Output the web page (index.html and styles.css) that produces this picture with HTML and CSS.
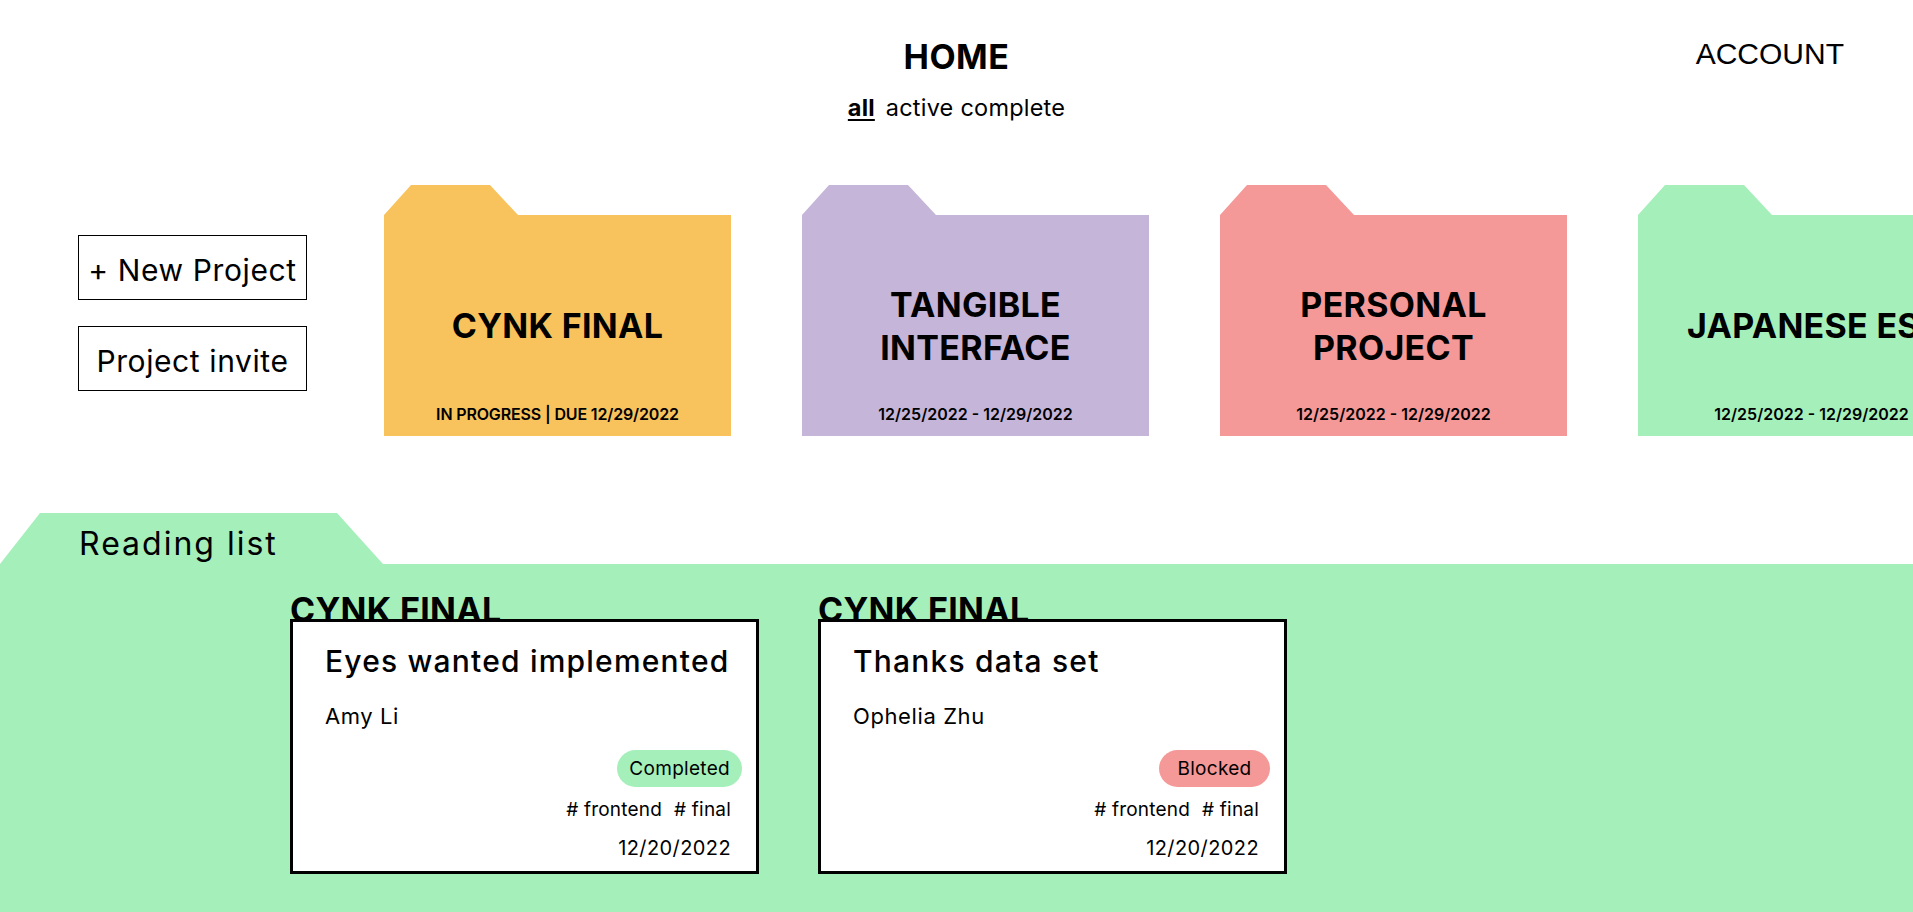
FILE: index.html
```html
<!DOCTYPE html>
<html lang="en">
<head>
<meta charset="utf-8">
<title>Home</title>
<link rel="stylesheet" href="styles.css">
</head>
<body>
<header class="topbar">
  <div class="topbar-side"></div>
  <div class="topbar-center">
    <h1 class="home-title">HOME</h1>
    <nav class="filters">
      <a class="filter filter-current">all</a>
      <a class="filter">active</a>
      <a class="filter">complete</a>
    </nav>
  </div>
  <div class="topbar-side topbar-right">
    <a class="account">ACCOUNT</a>
  </div>
</header>

<section class="projects">
  <div class="actions">
    <button class="action-btn">+ New Project</button>
    <button class="action-btn">Project invite</button>
  </div>
  <div class="folders">
    <div class="folder folder-yellow">
      <div class="folder-body">
        <h2 class="folder-title">CYNK FINAL</h2>
        <p class="folder-meta">IN PROGRESS | DUE 12/29/2022</p>
      </div>
    </div>
    <div class="folder folder-purple">
      <div class="folder-body">
        <h2 class="folder-title">TANGIBLE INTERFACE</h2>
        <p class="folder-meta">12/25/2022 - 12/29/2022</p>
      </div>
    </div>
    <div class="folder folder-pink">
      <div class="folder-body">
        <h2 class="folder-title">PERSONAL PROJECT</h2>
        <p class="folder-meta">12/25/2022 - 12/29/2022</p>
      </div>
    </div>
    <div class="folder folder-green">
      <div class="folder-body">
        <h2 class="folder-title">JAPANESE&nbsp;ESSAY</h2>
        <p class="folder-meta">12/25/2022 - 12/29/2022</p>
      </div>
    </div>
  </div>
</section>

<section class="reading">
  <div class="reading-tab">
    <h2 class="reading-title">Reading list</h2>
  </div>
  <div class="reading-body">
    <div class="task-group">
      <h3 class="task-project">CYNK FINAL</h3>
      <article class="task-card">
        <h4 class="task-title">Eyes wanted implemented</h4>
        <p class="task-person">Amy Li</p>
        <div class="task-meta">
          <span class="status status-completed">Completed</span>
          <p class="task-tags"><span># frontend</span><span># final</span></p>
          <p class="task-date">12/20/2022</p>
        </div>
      </article>
    </div>
    <div class="task-group">
      <h3 class="task-project">CYNK FINAL</h3>
      <article class="task-card">
        <h4 class="task-title">Thanks data set</h4>
        <p class="task-person">Ophelia Zhu</p>
        <div class="task-meta">
          <span class="status status-blocked">Blocked</span>
          <p class="task-tags"><span># frontend</span><span># final</span></p>
          <p class="task-date">12/20/2022</p>
        </div>
      </article>
    </div>
  </div>
</section>
</body>
</html>
```

FILE: styles.css
```css
* {
  box-sizing: border-box;
}

html, body {
  margin: 0;
  padding: 0;
  overflow: hidden;
}

body {
  font-family: Inter, "Noto Sans", sans-serif;
  color: #000;
  background: #fff;
  width: 1913px;
  height: 912px;
}

p, h1, h2, h3, h4 {
  margin: 0;
}

/* ---------- Header ---------- */
.topbar {
  display: grid;
  grid-template-columns: 1fr auto 1fr;
  padding-top: 37px;
}

.topbar-center {
  display: flex;
  flex-direction: column;
  align-items: center;
}

.home-title {
  font-size: 34px;
  line-height: 40px;
  font-weight: 700;
  letter-spacing: 0.5px;
}

.filters {
  margin-top: 17px;
  display: flex;
  gap: 8px;
  font-size: 23.5px;
  line-height: 28px;
  letter-spacing: 0.2px;
}

.filter {
  color: #000;
  cursor: pointer;
}

.filter + .filter {
  margin-left: -1px;
}

.filter-current {
  font-weight: 700;
  text-decoration: underline;
  text-underline-offset: 3px;
  margin-right: 4px;
}

.topbar-right {
  display: flex;
  justify-content: flex-end;
  align-items: flex-start;
  padding-right: 69px;
}

.account {
  font-family: "Liberation Sans", Arial, sans-serif;
  font-size: 30px;
  line-height: 36px;
  color: #000;
  margin-top: -1px;
}

/* ---------- Projects ---------- */
.projects {
  display: flex;
  margin-top: 63px;
  padding-left: 78px;
  overflow: hidden;
}

.actions {
  display: flex;
  flex-direction: column;
  gap: 26px;
  margin-top: 50px;
  flex-shrink: 0;
}

.action-btn {
  width: 229px;
  height: 65px;
  border: 1px solid #000;
  background: #fff;
  font-family: Inter, "Noto Sans", sans-serif;
  font-size: 30px;
  letter-spacing: 0.6px;
  color: #000;
  padding: 4px 0 0;
}

.folders {
  display: flex;
  gap: 71px;
  margin-left: 77px;
}

.folder {
  flex-shrink: 0;
  width: 347px;
  height: 251px;
  padding-top: 30px;
  clip-path: polygon(0 30px, 27px 0, 106px 0, 134px 30px, 100% 30px, 100% 100%, 0 100%);
}

.folder-yellow { background: #f8c35c; }
.folder-purple { background: #c5b5d9; }
.folder-pink { background: #f59898; }
.folder-green { background: #a5efba; }

.folder-body {
  height: 100%;
  display: grid;
  grid-template-rows: 1fr auto 1fr;
  grid-template-columns: minmax(0, 1fr);
  justify-items: center;
  padding: 12px 49px 12px;
}

.folder-title {
  grid-row: 2;
  justify-self: stretch;
  font-size: 34px;
  line-height: 43px;
  font-weight: 700;
  text-align: center;
  letter-spacing: 0.3px;
}

.folder-meta {
  grid-row: 3;
  align-self: end;
  font-size: 16px;
  line-height: 19px;
  font-weight: 600;
  white-space: nowrap;
}

.folder-yellow .folder-meta {
  letter-spacing: -0.15px;
}

/* ---------- Reading list ---------- */
.reading {
  margin-top: 77px;
}

.reading-tab {
  width: 383px;
  height: 51px;
  background: #a5efba;
  clip-path: polygon(40px 0, 337px 0, 100% 100%, 0 100%);
  padding: 12px 0 0 79px;
}

.reading-title {
  font-size: 32px;
  line-height: 38px;
  font-weight: 400;
  letter-spacing: 2px;
}

.reading-body {
  background: #a5efba;
  display: flex;
  gap: 59px;
  padding: 36px 0 0 290px;
  height: 348px;
}

.task-group {
  width: 469px;
  display: flex;
  flex-direction: column;
}

.task-project {
  font-size: 34px;
  line-height: 19px;
  font-weight: 700;
  letter-spacing: 0.3px;
  white-space: nowrap;
}

.task-card {
  position: relative;
  height: 255px;
  border: 3px solid #000;
  background: #fff;
  padding: 21px 25px 0 32px;
  display: flex;
  flex-direction: column;
}

.task-title {
  font-size: 30px;
  line-height: 36px;
  font-weight: 500;
  letter-spacing: 1.2px;
  white-space: nowrap;
}

.task-person {
  margin-top: 24px;
  font-size: 22px;
  line-height: 26px;
  letter-spacing: 0.6px;
}

.task-meta {
  display: flex;
  flex-direction: column;
  align-items: flex-end;
  margin-top: 21px;
}

.status {
  display: inline-block;
  margin-right: -11px;
  min-width: 111px;
  text-align: center;
  height: 37px;
  line-height: 37px;
  padding: 0 12px;
  border-radius: 19px;
  font-size: 19px;
  letter-spacing: 0.3px;
}

.status-completed { background: #a5efba; }
.status-blocked { background: #f59898; }

.task-tags {
  margin-top: 11px;
  display: flex;
  gap: 12px;
  font-size: 19px;
  line-height: 24px;
  letter-spacing: 0.2px;
}

.task-date {
  margin-top: 14px;
  font-size: 20px;
  line-height: 24px;
  letter-spacing: 0.4px;
}
```
